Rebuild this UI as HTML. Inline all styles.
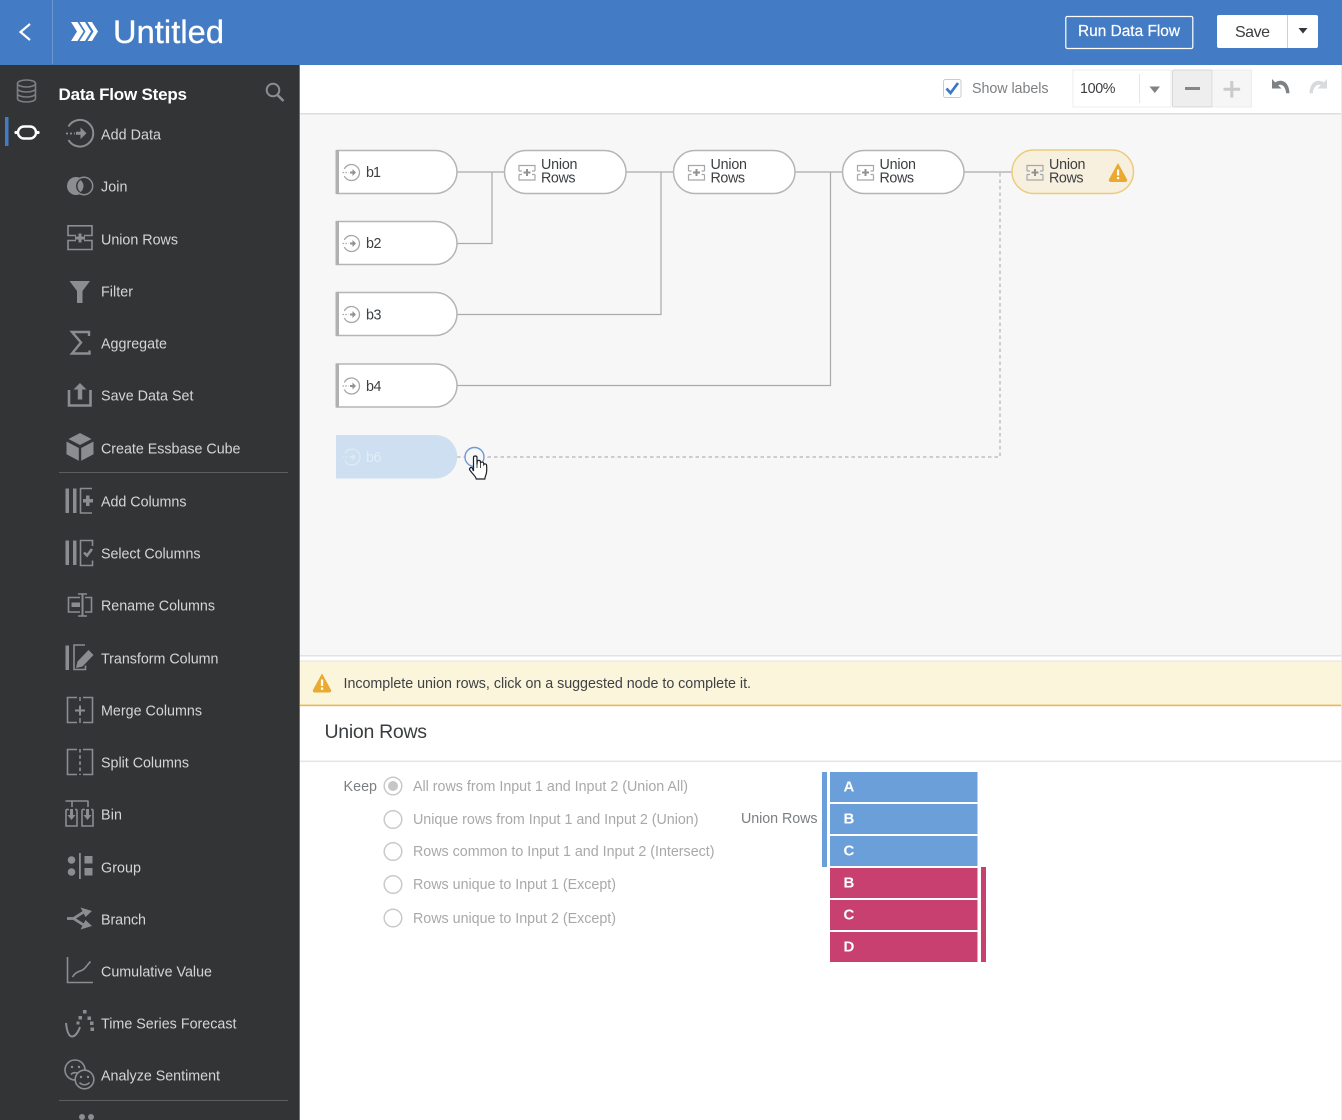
<!DOCTYPE html>
<html lang="en"><head><meta charset="utf-8"><title>Untitled</title>
<style>
html,body{margin:0;padding:0;width:1342px;height:1120px;overflow:hidden;background:#fff}
svg{display:block;font-family:"Liberation Sans",Arial,sans-serif}
.s text{font-size:14.3px;fill:#d4d5d6}
.ic{fill:none;stroke:#8b8e91;stroke-width:1.6}
.f{fill:#8b8e91;stroke:none}
.n{fill:#fff;stroke:#b5b5b5;stroke-width:1.5}
.l{fill:none;stroke:#aaa;stroke-width:1.2}
.d{fill:none;stroke:#b4b4b4;stroke-width:1.2;stroke-dasharray:3.5 3}
.t{font-size:14.3px;fill:#3c3f42}
.u{fill:none;stroke:#a5a8ab;stroke-width:1.2}
.r{fill:#fff;stroke:#c9c9c9;stroke-width:1.5}
.o{font-size:14.3px;fill:#a9a9a9}
.b{font-size:15px;font-weight:bold;fill:#fff}
</style></head><body>
<svg width="1342" height="1120" viewBox="0 0 1342 1120" xmlns="http://www.w3.org/2000/svg">
<!-- backgrounds -->
<rect width="1342" height="1120" fill="#fff"/>
<rect x="300" y="114" width="1042" height="541" fill="#f7f7f7"/>
<rect x="300" y="113" width="1042" height="1.5" fill="#dedede"/>
<rect x="300" y="655" width="1042" height="1.5" fill="#e2e2e2"/>
<rect x="300" y="656.5" width="1042" height="4.5" fill="#fff"/>
<rect x="300" y="661" width="1042" height="44" fill="#fbf5dc"/>
<rect x="300" y="660.5" width="1042" height="1" fill="#e3e3e3"/>
<rect x="300" y="704.6" width="1042" height="1.6" fill="#ebb750"/>
<rect x="300" y="760.5" width="1042" height="1.6" fill="#e6e6e6"/>
<rect x="1341" y="65" width="1" height="1055" fill="#eaeaea"/>

<!-- header -->
<rect width="1342" height="65" fill="#437bc4"/>
<rect x="52" y="0" width="1" height="64" fill="#6a97d2"/>
<path d="M30 24L20.500 32L30 40" fill="none" stroke="#fff" stroke-width="2.200"/>
<path d="M71 22h6.500l6 9.500-6 9.500h-6.500l6-9.500zM79.500 22h5.500l6 9.500-6 9.500h-5.500l6-9.500zM87.500 22h4.500l6 9.500-6 9.500h-4.500l6-9.500z" fill="#fff"/>
<text x="113" y="43" font-size="32.600" fill="#fff" stroke="#fff" stroke-width=".3" textLength="111">Untitled</text>
<rect x="1065.800" y="16.500" width="127" height="32" rx="1.500" fill="none" stroke="#fff" stroke-width="1.200"/>
<text x="1078" y="36" font-size="15.400" fill="#fff" stroke="#fff" stroke-width=".2" textLength="102">Run Data Flow</text>
<rect x="1217" y="15" width="101" height="33" rx="2" fill="#fff"/>
<rect x="1287" y="15" width="1" height="33" fill="#d0d0d0"/>
<text x="1235" y="37" font-size="16" fill="#3b3d40" textLength="35">Save</text>
<path d="M1298.500 28h9l-4.500 5.500z" fill="#33363a"/>

<!-- sidebar -->
<rect x="0" y="65" width="300" height="1055" fill="#323436"/>
<rect x="299" y="65" width="1" height="1055" fill="#707173"/>
<!-- db icon -->
<g class="ic" style="stroke:#7c7f82"><ellipse cx="26.500" cy="83.500" rx="9" ry="3.500"/><path d="M17.500 83.500v15c0 2 4 3.500 9 3.500s9-1.500 9-3.500v-15M17.500 88.500c0 2 4 3.500 9 3.500s9-1.500 9-3.500M17.500 93.500c0 2 4 3.500 9 3.500s9-1.500 9-3.500"/></g>
<rect x="5" y="117" width="3.500" height="29" fill="#437bc4"/>
<rect x="18" y="126.500" width="18" height="12" rx="6" fill="none" stroke="#fff" stroke-width="2.400"/>
<circle cx="16" cy="132.500" r="1.600" fill="#fff"/><circle cx="38" cy="132.500" r="1.600" fill="#fff"/>
<text x="58.500" y="100" font-size="17" font-weight="bold" fill="#fff" textLength="128.500">Data Flow Steps</text>
<circle cx="273" cy="90" r="6.300" fill="none" stroke="#8b8e91" stroke-width="2"/><path d="M277.500 95l6 6" stroke="#8b8e91" stroke-width="2.600"/>

<g class="s" transform="translate(0,.5)">
<text x="101" y="139" textLength="60">Add Data</text>
<text x="101" y="191" textLength="26.500">Join</text>
<text x="101" y="244" textLength="77">Union Rows</text>
<text x="101" y="296" textLength="32">Filter</text>
<text x="101" y="348" textLength="66">Aggregate</text>
<text x="101" y="400" textLength="92.500">Save Data Set</text>
<text x="101" y="453" textLength="139.500">Create Essbase Cube</text>
<text x="101" y="506" textLength="85.500">Add Columns</text>
<text x="101" y="558" textLength="99.500">Select Columns</text>
<text x="101" y="610" textLength="114">Rename Columns</text>
<text x="101" y="663" textLength="117.500">Transform Column</text>
<text x="101" y="715" textLength="101">Merge Columns</text>
<text x="101" y="767" textLength="88">Split Columns</text>
<text x="101" y="819" textLength="21">Bin</text>
<text x="101" y="872" textLength="40">Group</text>
<text x="101" y="924" textLength="45">Branch</text>
<text x="101" y="976" textLength="111">Cumulative Value</text>
<text x="101" y="1028" textLength="135.500">Time Series Forecast</text>
<text x="101" y="1080" textLength="119">Analyze Sentiment</text>
</g>
<rect x="59" y="472" width="229" height="1" fill="#5c5d5f"/>
<rect x="59" y="1100" width="229" height="1" fill="#5c5d5f"/>

<!-- Add Data -->
<path class="ic" style="stroke-width:2" d="M68.500 126.500a13.300 13.300 0 1 1 0 13.500"/>
<path class="f" d="M76 131.800h4.500v-4.300l6 5.800-6 5.800v-4.300h-4.500z"/>
<path d="M66 133.500h9" stroke="#8b8e91" stroke-width="1.800" stroke-dasharray="2 2"/>
<!-- Join -->
<circle cx="76" cy="186" r="9" class="f"/>
<circle cx="84" cy="186" r="8.700" fill="#323436" stroke="#8b8e91" stroke-width="1.500"/>
<path class="f" d="M80.500 180A7.500 7.500 0 0 1 80.500 192A7.500 7.500 0 0 1 80.500 180z"/>
<!-- Union Rows -->
<path class="ic" d="M76 235.500H68V225.800H92V235.500H84M76 240.500H68V249.500H92V240.500H84"/>
<path class="f" d="M78.500 233.500h3v3h3.500v3h-3.500v3h-3v-3h-3.500v-3h3.500z"/>
<!-- Filter -->
<path class="f" d="M69.500 281h20.500l-7.500 10v12h-5.500v-12z"/>
<!-- Aggregate -->
<path class="ic" style="stroke-width:2.400" d="M89 336v-4h-17l9 10.500-9 11h17.500v-3"/>
<!-- Save data set -->
<path class="ic" style="stroke-width:2.600" d="M69 390v15.500h21.500v-15.500"/>
<path class="f" d="M80 383l6.500 6.500h-4.300v10h-4.400v-10h-4.300z"/>
<!-- Cube -->
<path class="f" d="M80 433l11.500 6-11.500 6-11.500-6z"/>
<path class="f" d="M66.500 441.500l12.300 6.500v12.800l-12.300-6.500zM93.500 441.500l-12.300 6.500v12.800l12.300-6.500z"/>
<!-- Add Columns -->
<rect x="65.500" y="488.500" width="3.500" height="24.500" class="f"/><rect x="73" y="488.500" width="3.500" height="24.500" class="f"/>
<path class="ic" d="M92 488.500h-11.500v24.500h11.500"/>
<path class="f" d="M86 495.500h3.500v3.500h3.500v3.500h-3.500v3.500h-3.500v-3.500h-3v-3.500h3z"/>
<!-- Select Columns -->
<rect x="65.500" y="540.500" width="3.500" height="24.500" class="f"/><rect x="73" y="540.500" width="3.500" height="24.500" class="f"/>
<path class="ic" d="M92.500 546v-5.500h-12v25h12v-5"/>
<path d="M84 552.500l3 3 5-6.500" fill="none" stroke="#8b8e91" stroke-width="2.600"/>
<!-- Rename -->
<path class="ic" d="M80 597.500h-11.500v14.500h11.500M85 597.500h6.500v14.500h-6.500M78 594h9M78 616h9"/>
<rect x="81.500" y="593.500" width="2" height="23" class="f"/>
<rect x="71.500" y="602.500" width="8.500" height="4.500" class="f"/>
<!-- Transform -->
<rect x="65.500" y="645.500" width="3.500" height="24.500" class="f"/>
<path class="ic" d="M85 645h-11v24.500h11.500v-4"/>
<path class="f" d="M76 668l1.500-6.500 11-11.500 5 5-11 11.500z"/>
<!-- Merge -->
<path class="ic" d="M77 697.500h-9.500v25h9.500M83 697.500h9.500v25h-9.500"/>
<path class="f" d="M79 705.500h2v4h4v2h-4v4h-2v-4h-4v-2h4z"/>
<path d="M80 697v4M80 718v5" stroke="#8b8e91" stroke-width="1.500"/>
<!-- Split -->
<path class="ic" d="M77 749.500h-9.500v25h9.500M83 749.500h9.500v25h-9.500"/>
<path d="M80 749v26" stroke="#8b8e91" stroke-width="1.700" stroke-dasharray="3.500 2.700"/>
<!-- Bin -->
<path class="ic" d="M65.500 801h23M72 801v6M88 801v6M66 809.500v16.500h11v-16.500M82 809.500v16.500h11v-16.500M66 809.500h3M75 809.500h2M82 809.500h3M91 809.500h2"/>
<path class="f" d="M70 809h3v6h2.500l-4 5-4-5h2.500zM86 809h3v6h2.500l-4 5-4-5h2.500z"/>
<!-- Group -->
<circle cx="71.500" cy="860" r="3.800" class="f"/><circle cx="71.500" cy="872" r="3.800" class="f"/>
<rect x="84.500" y="856" width="8" height="7.500" class="f"/><rect x="84.500" y="868" width="8" height="7.500" class="f"/>
<rect x="79" y="853" width="1.800" height="26" class="f"/>
<!-- Branch -->
<path d="M67 918.500h6.500l11-7M73.500 918.500l11 7" fill="none" stroke="#8b8e91" stroke-width="2.800"/>
<path class="f" d="M80.500 907.500l11.500 3.500-6.500 6zM80.500 929.500l11.500-3.500-6.500-6z"/>
<!-- Cumulative -->
<path class="ic" d="M67.500 957v25.500h25.500"/>
<path class="ic" d="M72.500 977c2-4 5-5 9-6.500s5-5 9-9"/>
<!-- Time Series -->
<path d="M66 1023c1 9 3 13.500 6 13.500s6-4 8-9.500" fill="none" stroke="#8b8e91" stroke-width="2"/>
<rect x="76.500" y="1021.500" width="3" height="3" class="f"/><rect x="78.500" y="1016" width="3.500" height="3.500" class="f"/><rect x="83" y="1010" width="3.500" height="3.500" class="f"/><rect x="87.500" y="1016.500" width="3.500" height="3.500" class="f"/><rect x="90" y="1021.500" width="3.500" height="3.500" class="f"/><rect x="90.500" y="1027.500" width="3.500" height="3.500" class="f"/>
<!-- Sentiment -->
<path class="ic" d="M75 1080A10 10 0 1 1 85 1070"/>
<path class="ic" d="M71 1074.500c1.500-2 5-2.500 7-1"/>
<circle cx="72" cy="1067" r="1.200" class="f"/><circle cx="79" cy="1067" r="1.200" class="f"/>
<circle cx="84.500" cy="1079.500" r="9.300" class="ic"/>
<circle cx="81" cy="1077" r="1.200" class="f"/><circle cx="88" cy="1077" r="1.200" class="f"/>
<path class="ic" d="M79.500 1082.500c2.500 3 7.500 3 10 0"/>
<!-- cut-off -->
<circle cx="82" cy="1117" r="3" class="f"/><circle cx="91" cy="1117" r="3" class="f"/>

<!-- toolbar -->
<rect x="943.500" y="79.500" width="17.500" height="18" rx="2" fill="#fff" stroke="#c8cbce"/>
<path d="M946.500 88.500l4 4.500 7.500-10" fill="none" stroke="#3a76c6" stroke-width="2.700"/>
<text x="972" y="93" font-size="14.300" fill="#7c7f82" textLength="76.500">Show labels</text>
<rect x="1073" y="70" width="98" height="37" fill="#fff" stroke="#ececec"/>
<rect x="1139" y="74" width="1" height="29" fill="#e6e6e6"/>
<text x="1080" y="93" font-size="14.300" fill="#3b3d40" textLength="35.500">100%</text>
<path d="M1149.500 86.500h10.500l-5.200 6.500z" fill="#7f8285"/>
<rect x="1172.500" y="70" width="39.500" height="37" rx="1.500" fill="#eee" stroke="#d8d8d8"/>
<rect x="1185" y="87" width="15" height="3" fill="#83868a"/>
<rect x="1212.500" y="70" width="39" height="37" fill="#f6f6f6" stroke="#ececec"/>
<path d="M1230.300 81h3v6.800h6.800v3h-6.800v6.800h-3v-6.800h-6.800v-3h6.800z" fill="#c8cacc"/>
<path d="M1272 79v9.500h9.500l-3.300-3.300c3.500-1.500 7 .5 8 8h3.300c-.3-8-4-12.500-9-12.500-2.400 0-4 .6-5.200 1.800z" fill="#7f8285"/>
<path d="M1327 79v9.500h-9.500l3.300-3.300c-3.500-1.500-7 .5-8 8h-3.300c.3-8 4-12.500 9-12.500 2.400 0 4 .6 5.200 1.800z" fill="#d8dadb"/>

<!-- connectors -->
<path class="l" d="M457 172h47M492 172v71.500h-35M626 172h47M661 172v142.500H457M795 172h47M830.500 172v213.500H457M964 172h48"/>
<path class="d" d="M1000 173v284H486M457 457h8"/>

<!-- nodes -->
<g>
<path class="n" d="M337 150.500h98.500a21.500 21.500 0 0 1 0 43h-98.500z"/>
<path class="n" d="M337 221.500h98.500a21.500 21.500 0 0 1 0 43h-98.500z"/>
<path class="n" d="M337 292.500h98.500a21.500 21.500 0 0 1 0 43h-98.500z"/>
<path class="n" d="M337 364h98.500a21.500 21.500 0 0 1 0 43h-98.500z"/>
<rect x="335.500" y="150" width="3.500" height="44" fill="#b0b0b0"/>
<rect x="335.500" y="221" width="3.500" height="44" fill="#b0b0b0"/>
<rect x="335.500" y="292" width="3.500" height="44" fill="#b0b0b0"/>
<rect x="335.500" y="363.500" width="3.500" height="44" fill="#b0b0b0"/>
</g>
<defs>
<g id="ai"><path d="M-7.200-3.500A8 8 0 1 1-7.200 3.500" fill="none" stroke="#a5a8ab" stroke-width="1.300"/><path d="M-1.500-1h2.500v-2.500l3.500 3.500-3.500 3.500v-2.500h-2.500z" fill="#8f9295"/><path d="M-9 0h6" stroke="#a5a8ab" stroke-width="1.200" stroke-dasharray="1.500 1.300"/></g>
<g id="ui"><path class="u" d="M-8-1.500v-5.500H8v5.500M-8-1.500h3M5-1.500h3M-8 2v5.500H8V2M-8 2h3M5 2h3"/><path d="M-1-3.500h2v2.500h2.500v2H1v2.500h-2v-2.500h-2.500v-2H-1z" fill="#8f9295"/></g>
</defs>
<use href="#ai" x="351.500" y="172.500"/><use href="#ai" x="351.500" y="243.500"/><use href="#ai" x="351.500" y="314.500"/><use href="#ai" x="351.500" y="386"/>
<text x="366" y="177" class="t" textLength="15">b1</text>
<text x="366" y="248" class="t" textLength="15.500">b2</text>
<text x="366" y="319.500" class="t" textLength="15.500">b3</text>
<text x="366" y="391" class="t" textLength="15.500">b4</text>

<rect x="504.500" y="150.500" width="121.500" height="43" rx="21.500" class="n"/>
<rect x="673.500" y="150.500" width="121.500" height="43" rx="21.500" class="n"/>
<rect x="842.500" y="150.500" width="121.500" height="43" rx="21.500" class="n"/>
<rect x="1012" y="150" width="121.500" height="43.500" rx="21.700" fill="#f7f0df" stroke="#eccb7e" stroke-width="1.500"/>
<use href="#ui" x="527" y="172.500"/><use href="#ui" x="696.500" y="172.500"/><use href="#ui" x="865.500" y="172.500"/><use href="#ui" x="1035" y="172.500"/>
<text x="541" y="169" class="t" textLength="36.500">Union</text><text x="541" y="182.500" class="t" textLength="34.500">Rows</text>
<text x="710.500" y="169" class="t" textLength="36.500">Union</text><text x="710.500" y="182.500" class="t" textLength="34.500">Rows</text>
<text x="879.500" y="169" class="t" textLength="36.500">Union</text><text x="879.500" y="182.500" class="t" textLength="34.500">Rows</text>
<text x="1049" y="169" class="t" textLength="36.500">Union</text><text x="1049" y="182.500" class="t" textLength="34.500">Rows</text>
<path d="M1118 164l8.500 15.500q.7 2-1.300 2h-14.400q-2 0-1.300-2z" fill="#eaa92f" stroke="#eaa92f" stroke-width="1"/>
<rect x="1117" y="169.500" width="2.200" height="6" fill="#fff"/><rect x="1117" y="177" width="2.200" height="2.200" fill="#fff"/>

<!-- ghost node -->
<path d="M336 435h99.500a21.700 21.700 0 0 1 0 43.500h-99.500z" fill="#cddff0"/>
<g opacity=".55"><path d="M344.800 453.500A8 8 0 1 1 344.800 460.500" fill="none" stroke="#eef4fa" stroke-width="1.300"/><path d="M350 456h2.500v-2.500l3.500 3.500-3.500 3.500v-2.500H350z" fill="#eef4fa"/><path d="M342.500 457h6" stroke="#eef4fa" stroke-width="1.200" stroke-dasharray="1.500 1.300"/></g>
<text x="366" y="462" font-size="14.300" fill="#e3edf7" textLength="15.500">b6</text>
<circle cx="474.500" cy="457" r="9.500" fill="#f7f7f7" stroke="#6e9ad6" stroke-width="1.400"/>
<!-- hand cursor -->
<path d="M473.500 471v-13.500c0-2 3.500-2 3.500 0v7l.2-3c.3-1.500 3-1.500 3.200 0l.2 1.500c.3-1.300 2.800-1.300 3 .2l.2 1.300c.5-1 2.700-.7 2.800.8.300 4 .3 7.500-.9 10.200-.5 1.200-.8 2.200-.9 3.500h-8.500c-.5-2-2.100-3.700-3.800-5.500l-2.700-3.500c-1-1.700 1-3.200 2.500-2z" fill="#fff" stroke="#1d1f22" stroke-width="1.200"/>
<path d="M477 460v8M480.500 463v5" stroke="#1d1f22" stroke-width=".8"/>

<!-- message -->
<path d="M322 674.500l8.500 15.500q.7 2-1.300 2h-14.400q-2 0-1.300-2z" fill="#eaa92f" stroke="#eaa92f" stroke-width="1"/>
<rect x="320.900" y="679.500" width="2.300" height="6.500" fill="#fff"/><rect x="320.900" y="687.500" width="2.300" height="2.300" fill="#fff"/>
<text x="343.500" y="688" font-size="14.300" fill="#3f4245" textLength="407.500">Incomplete union rows, click on a suggested node to complete it.</text>
<text x="324.500" y="738" font-size="19.500" fill="#3b3e41" textLength="102.500">Union Rows</text>

<!-- form -->
<text x="343.500" y="791" font-size="14.300" fill="#7c7f82" textLength="33.500">Keep</text>
<circle cx="393" cy="786" r="8.800" class="r"/><circle cx="393" cy="786" r="5" fill="#c6c6c6"/>
<circle cx="393" cy="819.500" r="8.800" class="r"/>
<circle cx="393" cy="851.500" r="8.800" class="r"/>
<circle cx="393" cy="884.500" r="8.800" class="r"/>
<circle cx="393" cy="918" r="8.800" class="r"/>
<text x="413" y="791" class="o" textLength="275">All rows from Input 1 and Input 2 (Union All)</text>
<text x="413" y="824" class="o" textLength="285.500">Unique rows from Input 1 and Input 2 (Union)</text>
<text x="413" y="856" class="o" textLength="301.500">Rows common to Input 1 and Input 2 (Intersect)</text>
<text x="413" y="889" class="o" textLength="203">Rows unique to Input 1 (Except)</text>
<text x="413" y="923" class="o" textLength="203">Rows unique to Input 2 (Except)</text>

<!-- table -->
<text x="741" y="823" font-size="14.300" fill="#7c7f82" textLength="76.500">Union Rows</text>
<rect x="822" y="772" width="5" height="95" fill="#6a9fd9"/>
<rect x="830" y="772" width="147.500" height="30" fill="#6a9fd9"/>
<rect x="830" y="804" width="147.500" height="30" fill="#6a9fd9"/>
<rect x="830" y="836" width="147.500" height="30" fill="#6a9fd9"/>
<rect x="830" y="868" width="147.500" height="30" fill="#c8406f"/>
<rect x="830" y="900" width="147.500" height="30" fill="#c8406f"/>
<rect x="830" y="932" width="147.500" height="30" fill="#c8406f"/>
<rect x="981" y="867" width="5" height="95" fill="#c8406f"/>
<text x="843.500" y="791.500" class="b">A</text>
<text x="843.500" y="823.500" class="b">B</text>
<text x="843.500" y="855.500" class="b">C</text>
<text x="843.500" y="887.500" class="b">B</text>
<text x="843.500" y="919.500" class="b">C</text>
<text x="843.500" y="951.500" class="b">D</text>
</svg>
</body></html>
